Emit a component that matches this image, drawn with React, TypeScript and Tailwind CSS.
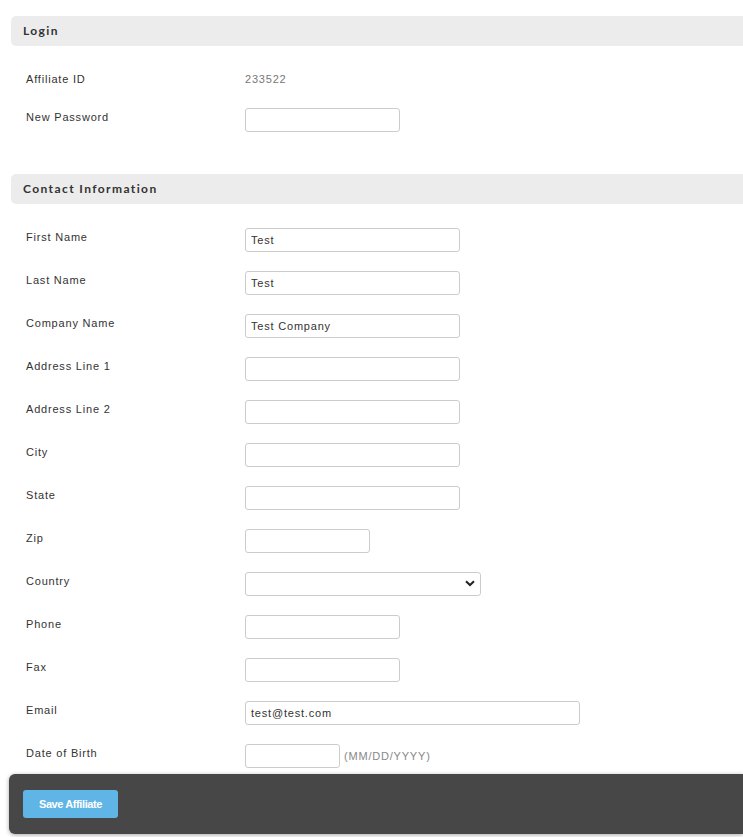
import React from "react";

const label = "text-[11px] tracking-[0.8px] text-[#333] font-['Liberation_Sans',Arial,sans-serif]";
const inputCls =
  "block h-[24px] border border-[#ccc] rounded-[3px] bg-white px-[5px] text-[11px] tracking-[0.8px] text-[#333] font-['Liberation_Sans',Arial,sans-serif] outline-none";

function Header({ title }: { title: string }) {
  return (
    <div className="ml-[11px] h-[30px] bg-[#ececec] rounded-l-[5px] flex items-center pl-[12px] pb-[1px]">
      <span className="text-[12px] font-bold tracking-[1.4px] text-[#333] font-['Lato',sans-serif]">{title}</span>
    </div>
  );
}

function Row({ name, children, mt = "mt-[19px]" }: { name: string; children: React.ReactNode; mt?: string }) {
  return (
    <div className={`flex items-start ${mt}`}>
      <div className={`${label} w-[245px] shrink-0 pl-[26px] pt-[2px] leading-[14px]`}>{name}</div>
      <div className="flex items-center">{children}</div>
    </div>
  );
}

export default function App() {
  const fields: { name: string; value?: string; w: string }[] = [
    { name: "Last Name", value: "Test", w: "w-[215px]" },
    { name: "Company Name", value: "Test Company", w: "w-[215px]" },
    { name: "Address Line 1", w: "w-[215px]" },
    { name: "Address Line 2", w: "w-[215px]" },
    { name: "City", w: "w-[215px]" },
    { name: "State", w: "w-[215px]" },
    { name: "Zip", w: "w-[125px]" },
  ];
  return (
    <div className="min-h-[837px] bg-white pt-[16px] pb-[120px] font-['Liberation_Sans',Arial,sans-serif]">
      <Header title="Login" />
      <div className="flex items-start mt-[26px]">
        <div className={`${label} w-[245px] shrink-0 pl-[26px] leading-[14px]`}>Affiliate ID</div>
        <div className="text-[11px] tracking-[0.8px] text-[#777] leading-[14px]">233522</div>
      </div>
      <Row name="New Password" mt="mt-[22px]">
        <input type="password" className={`${inputCls} w-[155px]`} />
      </Row>

      <div className="mt-[42px]">
        <Header title="Contact Information" />
      </div>

      <Row name="First Name" mt="mt-[24px]">
        <input className={`${inputCls} w-[215px]`} defaultValue="Test" />
      </Row>
      {fields.map((f) => (
        <Row key={f.name} name={f.name}>
          <input className={`${inputCls} ${f.w}`} defaultValue={f.value ?? ""} />
        </Row>
      ))}
      <Row name="Country">
        <div className="relative w-[236px] h-[24px]">
          <select className={`${inputCls} w-[236px] appearance-none`} defaultValue="">
            <option value=""></option>
          </select>
          <svg
            className="absolute right-[6px] top-[8px] pointer-events-none"
            width="10"
            height="7"
            viewBox="0 0 10 7"
          >
            <path d="M1 1.2 L5 5 L9 1.2" fill="none" stroke="#222" strokeWidth="2" />
          </svg>
        </div>
      </Row>
      <Row name="Phone">
        <input className={`${inputCls} w-[155px]`} />
      </Row>
      <Row name="Fax">
        <input className={`${inputCls} w-[155px]`} />
      </Row>
      <Row name="Email">
        <input className={`${inputCls} w-[335px]`} defaultValue="test@test.com" />
      </Row>
      <Row name="Date of Birth">
        <input className={`${inputCls} w-[95px]`} />
        <span className="ml-[4px] text-[11px] tracking-[0.8px] text-[#888]">(MM/DD/YYYY)</span>
      </Row>

      <div className="fixed left-[9px] right-0 bottom-[3px] h-[60px] bg-[#474747] rounded-l-[6px] shadow-[0_1px_4px_rgba(0,0,0,0.35)] flex items-center pl-[14px]">
        <button className="h-[28px] w-[95px] bg-[#5fb5e5] rounded-[3px] text-white text-[11px] tracking-[-0.4px] font-bold font-['Liberation_Sans',Arial,sans-serif]">
          Save Affiliate
        </button>
      </div>
    </div>
  );
}
